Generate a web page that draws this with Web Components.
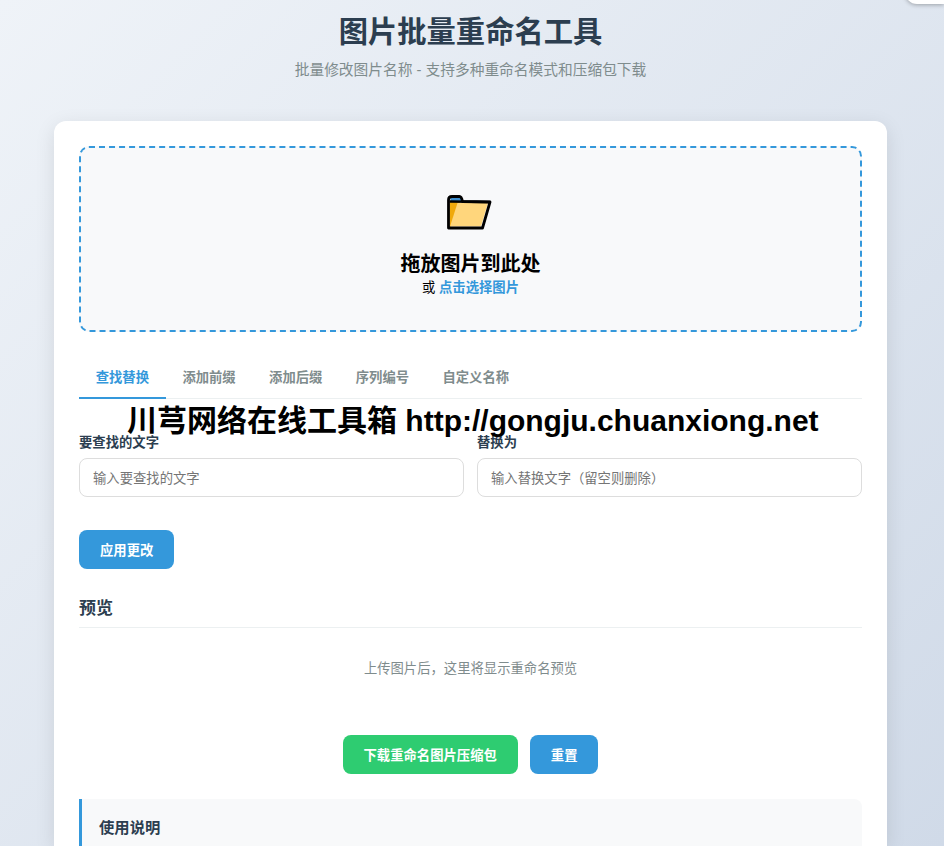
<!DOCTYPE html>
<html lang="zh-CN">
<head>
<meta charset="utf-8">
<title>图片批量重命名工具</title>
<style>
  html, body { margin: 0; height: 846px; overflow: hidden; }
  body {
    font-family: "Liberation Sans", "Noto Sans CJK SC", sans-serif;
    background: linear-gradient(135deg, #eff3f8 0%, #d0dae8 100%);
    color: #2c3e50;
  }
</style>
</head>
<body>
<rename-app></rename-app>
<script>
const css = (s) => `<style>${s}</style>`

customElements.define('page-header', class extends HTMLElement {
  constructor() {
    super()
    this.attachShadow({ mode: 'open' }).innerHTML = css(`
      :host { display: block; text-align: center; height: 121px; padding-top: 10px; box-sizing: border-box; }
      h1 { margin: 0; font-size: 29.3px; line-height: 43px; font-weight: 700; color: #2c3e50; }
      p { margin: 7px 0 0; font-size: 14.72px; line-height: 20px; color: #7f8c8d; }
    `) + `<h1><slot name="title"></slot></h1><p><slot name="sub"></slot></p>`
  }
})

customElements.define('drop-zone', class extends HTMLElement {
  constructor() {
    super()
    this.attachShadow({ mode: 'open' }).innerHTML = css(`
      :host {
        display: flex; flex-direction: column; align-items: center; box-sizing: border-box;
        height: 186px; padding-top: 42px; border: 2px dashed #3498db; border-radius: 10px;
        background: #f8f9fa; color: #000;
      }
      svg { display: block; width: 54px; height: 44px; margin-left: -3px; }
      h3 { margin: 16px 0 0; font-size: 20px; line-height: 29px; font-weight: 700; }
      p { margin: 0; font-size: 13.33px; line-height: 18px; }
      b { color: #3498db; font-weight: 700; }
    `) + `
      <svg viewBox="0 0 54 44">
        <path d="M8.5 12 L8.5 7.5 L19 7.5 L20 12 Z" fill="#3e8fd0"/>
        <path d="M7.5 11 L18 12 L8.5 37 L7.5 37 Z" fill="#f0a90c"/>
        <path d="M15.5 13 L46 13 L39 36.5 L8 36.5 Z" fill="#ffd67c"/>
        <path d="M7.5 11.5 L48 12" stroke="#000" stroke-width="2.4" fill="none"/>
        <path d="M6.5 38 L6.5 10 Q6.5 6.5 10 6.5 L17.5 6.5 Q19.5 6.5 20.5 11.5 L48 12 L40.5 38 Z" fill="none" stroke="#000" stroke-width="2.8" stroke-linejoin="round"/>
      </svg>
      <h3>拖放图片到此处</h3>
      <p>或 <b>点击选择图片</b></p>`
  }
})

customElements.define('tab-bar', class extends HTMLElement {
  constructor() {
    super()
    this.attachShadow({ mode: 'open' }).innerHTML = css(`
      :host { display: flex; border-bottom: 1px solid #ecf0f1; height: 41px; box-sizing: border-box; }
    `) + `<slot></slot>`
  }
})

customElements.define('tab-item', class extends HTMLElement {
  constructor() {
    super()
    this.attachShadow({ mode: 'open' }).innerHTML = css(`
      :host {
        display: block; box-sizing: border-box; height: 41px; padding: 0 16.7px;
        font-size: 13.33px; line-height: 39px; font-weight: 700; color: #7f8c8d;
        border-bottom: 2px solid transparent;
      }
      :host([active]) { color: #3498db; border-bottom-color: #3498db; }
    `) + `<slot></slot>`
  }
})

customElements.define('text-field', class extends HTMLElement {
  constructor() {
    super()
    const root = this.attachShadow({ mode: 'open' })
    root.innerHTML = css(`
      :host { display: block; }
      label { display: block; padding-top: 1px; font-size: 13.33px; line-height: 18px; font-weight: 700; color: #2c3e50; margin-bottom: 6px; }
      input {
        display: block; width: 100%; box-sizing: border-box; height: 39px; padding: 2px 13px 0;
        border: 1px solid #ddd; border-radius: 8px; background: #fff; outline: 0;
        font: 13.33px "Liberation Sans", "Noto Sans CJK SC", sans-serif;
      }
      input::placeholder { color: #757575; opacity: 1; }
    `) + `<label></label><input>`
    root.querySelector('label').textContent = this.getAttribute('label')
    root.querySelector('input').placeholder = this.getAttribute('placeholder')
  }
})

customElements.define('action-button', class extends HTMLElement {
  constructor() {
    super()
    this.attachShadow({ mode: 'open' }).innerHTML = css(`
      :host {
        display: inline-block; box-sizing: border-box; height: 39px; padding: 2px 21px 0;
        border-radius: 8px; background: #3498db; color: #fff;
        font-size: 13.33px; line-height: 37px; font-weight: 700;
      }
      :host([variant="success"]) { background: #2ecc71; }
    `) + `<slot></slot>`
  }
})

customElements.define('preview-panel', class extends HTMLElement {
  constructor() {
    super()
    this.attachShadow({ mode: 'open' }).innerHTML = css(`
      :host { display: block; }
      h3 { margin: 0; height: 34px; box-sizing: border-box; padding-top: 1px; border-bottom: 1px solid #ecf0f1; font-size: 17px; line-height: 28px; font-weight: 700; color: #2c3e50; }
      p { margin: 0; padding-top: 32px; text-align: center; font-size: 13.33px; line-height: 18px; color: #7f8c8d; }
    `) + `<h3>预览</h3><p>上传图片后，这里将显示重命名预览</p>`
  }
})

customElements.define('help-box', class extends HTMLElement {
  constructor() {
    super()
    this.attachShadow({ mode: 'open' }).innerHTML = css(`
      :host {
        display: block; box-sizing: border-box; height: 47px; padding: 18px 17px 0;
        background: #f8f9fa; border-left: 3px solid #3498db; border-radius: 0 8px 0 0;
      }
      h4 { margin: 0; font-size: 15.33px; line-height: 22px; font-weight: 700; color: #2c3e50; }
    `) + `<h4><slot></slot></h4>`
  }
})

customElements.define('rename-app', class extends HTMLElement {
  constructor() {
    super()
    this.attachShadow({ mode: 'open' }).innerHTML = css(`
      :host { display: block; position: relative; width: 941px; height: 846px; box-sizing: border-box; padding: 0 54px; }
      .card {
        background: #fff; border-radius: 12px 12px 0 0; padding: 25px 25px 0; height: 725px; box-sizing: border-box;
        box-shadow: 0 5px 20px rgba(0,0,0,.1);
      }
      tab-bar { margin-top: 26px; }
      .fields { display: grid; grid-template-columns: 1fr 1fr; gap: 13px; margin-top: 34px; }
      .apply { margin-top: 33px; }
      preview-panel { margin-top: 25px; }
      .actions { display: flex; justify-content: center; gap: 12px; margin-top: 57px; }
      help-box { margin-top: 25px; }
      .watermark {
        position: absolute; left: 127px; top: 402px; white-space: nowrap;
        font-size: 30px; line-height: 38px; font-weight: 700; color: #000;
      }
      .corner {
        position: absolute; left: 905px; top: -30px; width: 39px; height: 34px;
        background: #fff; border-radius: 12px 0 0 12px; box-shadow: 0 1px 4px rgba(0,0,0,.3);
      }
    `) + `
      <page-header>
        <span slot="title">图片批量重命名工具</span>
        <span slot="sub">批量修改图片名称 - 支持多种重命名模式和压缩包下载</span>
      </page-header>
      <div class="card">
        <drop-zone></drop-zone>
        <tab-bar>
          <tab-item active>查找替换</tab-item>
          <tab-item>添加前缀</tab-item>
          <tab-item>添加后缀</tab-item>
          <tab-item>序列编号</tab-item>
          <tab-item>自定义名称</tab-item>
        </tab-bar>
        <div class="fields">
          <text-field label="要查找的文字" placeholder="输入要查找的文字"></text-field>
          <text-field label="替换为" placeholder="输入替换文字（留空则删除）"></text-field>
        </div>
        <div class="apply"><action-button>应用更改</action-button></div>
        <preview-panel></preview-panel>
        <div class="actions">
          <action-button variant="success">下载重命名图片压缩包</action-button>
          <action-button>重置</action-button>
        </div>
        <help-box>使用说明</help-box>
      </div>
      <div class="watermark">川芎网络在线工具箱 http://gongju.chuanxiong.net</div>
      <div class="corner"></div>`
  }
})
</script>
</body>
</html>
